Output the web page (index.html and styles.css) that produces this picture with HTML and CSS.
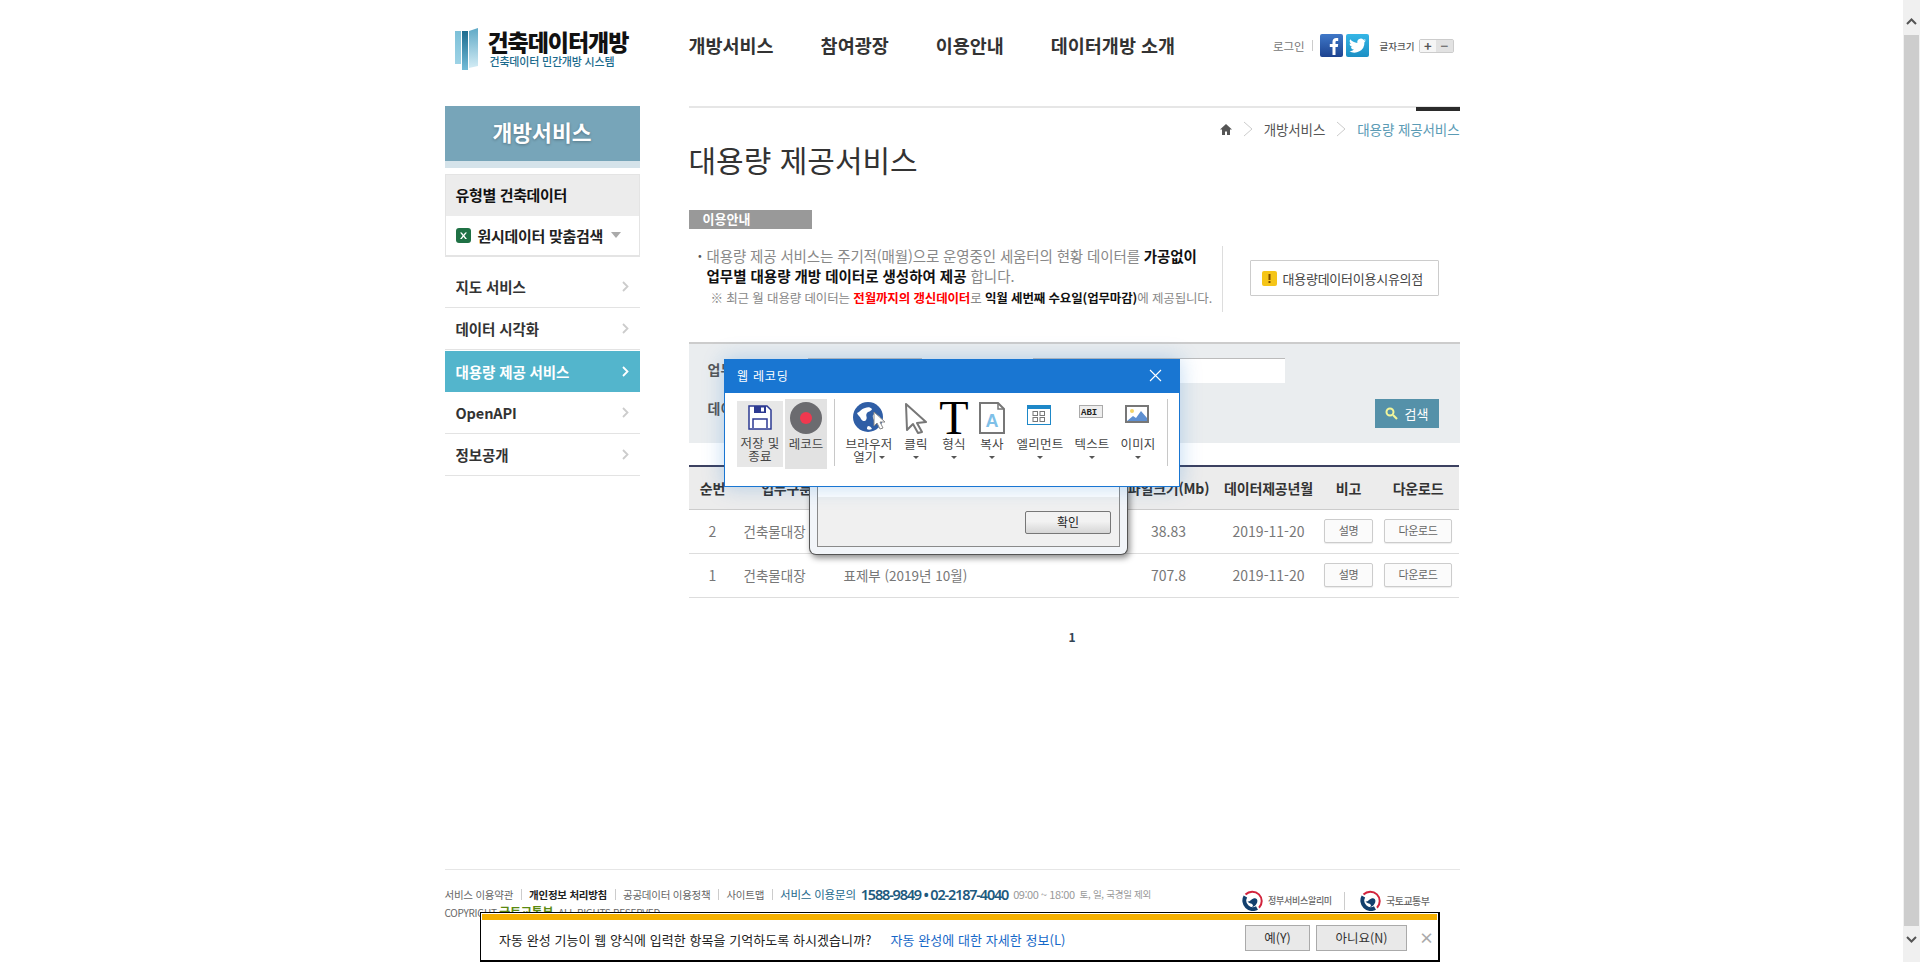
FILE: index.html
```html
<!DOCTYPE html>
<html lang="ko">
<head>
<meta charset="utf-8">
<title>대용량 제공서비스</title>
<link rel="stylesheet" href="styles.css">
</head>
<body>
<div class="wrap">
  <header class="header">
    <a class="logo">
      <svg class="logo-mark" width="24" height="42" viewBox="0 0 24 42">
        <defs>
          <linearGradient id="lg1" x1="0" y1="0" x2="0" y2="1"><stop offset="0" stop-color="#7cc0d8"/><stop offset="1" stop-color="#9ed3e6"/></linearGradient>
          <linearGradient id="lg2" x1="0" y1="0" x2="0" y2="1"><stop offset="0" stop-color="#1c6c8f"/><stop offset="1" stop-color="#73bcd8"/></linearGradient>
          <linearGradient id="lg3" x1="0" y1="0" x2="0" y2="1"><stop offset="0" stop-color="#5fa9c6"/><stop offset="1" stop-color="#d3ecf5"/></linearGradient>
        </defs>
        <path d="M0 3h6v33H0z" fill="url(#lg1)"/>
        <path d="M7 3h6v39H7z" fill="url(#lg2)"/>
        <path d="M14 3l9-3v38l-9 2z" fill="url(#lg3)"/>
      </svg>
      <span class="logo-text">
        <strong class="logo-title">건축데이터개방</strong>
        <span class="logo-sub">건축데이터 민간개방 시스템</span>
      </span>
    </a>
    <nav class="gnb">
      <a>개방서비스</a><a>참여광장</a><a>이용안내</a><a>데이터개방 소개</a>
    </nav>
    <div class="util">
      <a class="login">로그인</a>
      <span class="util-sep"></span>
      <svg class="sns" width="23" height="23" viewBox="0 0 23 23">
        <defs><linearGradient id="fb" x1="0" y1="0" x2="0" y2="1"><stop offset="0" stop-color="#3f78c8"/><stop offset="1" stop-color="#1d4390"/></linearGradient></defs>
        <rect width="23" height="23" rx="2" fill="url(#fb)"/>
        <path d="M12.500 21v-8h-2.700v-3h2.700V7.800c0-2.500 1.500-3.800 3.700-3.800h2v2.900h-1.400c-1 0-1.300.5-1.300 1.300V10h2.700l-.4 3h-2.300v8z" fill="#fff"/>
      </svg>
      <svg class="sns" width="23" height="23" viewBox="0 0 23 23">
        <defs><linearGradient id="tw" x1="0" y1="0" x2="0" y2="1"><stop offset="0" stop-color="#35b6e6"/><stop offset="1" stop-color="#1b8fc4"/></linearGradient></defs>
        <rect width="23" height="23" rx="2" fill="url(#tw)"/>
        <path d="M20 6.200c-.7.3-1.300.5-2 .6.700-.4 1.300-1.100 1.600-1.900-.7.4-1.400.7-2.200.9a3.500 3.500 0 0 0-6 3.200C8.500 8.800 6 7.400 4.200 5.300c-1 1.600-.5 3.700 1 4.700-.6 0-1.100-.2-1.600-.4 0 1.700 1.200 3.100 2.800 3.500-.5.100-1 .2-1.600.1.500 1.400 1.800 2.400 3.300 2.400A7 7 0 0 1 3 17.100 10 10 0 0 0 18.400 8.200c.6-.5 1.200-1.200 1.600-2z" fill="#fff"/>
      </svg>
      <span class="font-label">글자크기</span>
      <span class="font-btns"><b class="font-plus">+</b><b class="font-minus">−</b></span>
    </div>
  </header>

  <div class="content">
    <aside class="side">
      <h2 class="side-title">개방서비스</h2>
      <div class="type-box">
        <div class="type-head">유형별 건축데이터</div>
        <div class="type-row">
          <svg width="15" height="15" viewBox="0 0 15 15"><rect width="15" height="15" rx="3" fill="#1f7145"/><path d="M4 4.500h1.800L7.500 6.700 9.200 4.500H11L8.400 7.700 11 11H9.200L7.500 8.800 5.800 11H4l2.600-3.300z" fill="#fff"/></svg>
          <span>원시데이터 맞춤검색</span>
          <i class="tri"></i>
        </div>
      </div>
      <ul class="menu">
        <li class="menu-item"><span>지도 서비스</span><svg class="chev" width="7" height="11" viewBox="0 0 7 11"><path d="M1 1l4.500 4.500L1 10" fill="none" stroke="currentColor" stroke-width="1.800"/></svg></li>
        <li class="menu-item"><span>데이터 시각화</span><svg class="chev" width="7" height="11" viewBox="0 0 7 11"><path d="M1 1l4.500 4.500L1 10" fill="none" stroke="currentColor" stroke-width="1.800"/></svg></li>
        <li class="menu-item active"><span>대용량 제공 서비스</span><svg class="chev" width="7" height="11" viewBox="0 0 7 11"><path d="M1 1l4.500 4.500L1 10" fill="none" stroke="currentColor" stroke-width="1.800"/></svg></li>
        <li class="menu-item"><span>OpenAPI</span><svg class="chev" width="7" height="11" viewBox="0 0 7 11"><path d="M1 1l4.500 4.500L1 10" fill="none" stroke="currentColor" stroke-width="1.800"/></svg></li>
        <li class="menu-item"><span>정보공개</span><svg class="chev" width="7" height="11" viewBox="0 0 7 11"><path d="M1 1l4.500 4.500L1 10" fill="none" stroke="currentColor" stroke-width="1.800"/></svg></li>
      </ul>
    </aside>

    <main class="main">
      <div class="crumb">
        <svg width="12" height="11" viewBox="0 0 12 11"><path d="M6 0L0 5.500h2V11h3V7.500h2V11h3V5.500h2z" fill="#555"/></svg>
        <svg class="crumb-sep" width="10" height="16" viewBox="0 0 10 16"><path d="M1 1l8 7-8 7" fill="none" stroke="#ccc"/></svg>
        <span>개방서비스</span>
        <svg class="crumb-sep" width="10" height="16" viewBox="0 0 10 16"><path d="M1 1l8 7-8 7" fill="none" stroke="#ccc"/></svg>
        <span class="crumb-now">대용량 제공서비스</span>
      </div>
      <h1 class="page-title">대용량 제공서비스</h1>
      <div class="guide-tag">이용안내</div>
      <div class="guide">
        <div class="guide-text">
          <p class="guide-line guide-line-1"><span class="dot">·</span>대용량 제공 서비스는 주기적(매월)으로 운영중인 세움터의 현황 데이터를 <b>가공없이</b></p>
          <p class="guide-line"><b>업무별 대용량 개방 데이터로 생성하여 제공</b> 합니다.</p>
          <p class="guide-note">※ 최근 월 대용량 데이터는 <b class="red">전월까지의 갱신데이터</b>로 <b>익월 세번째 수요일(업무마감)</b>에 제공됩니다.</p>
        </div>
        <div class="guide-side">
          <a class="notice-btn">
            <svg width="15" height="15" viewBox="0 0 15 15"><rect width="15" height="15" rx="2" fill="#f5c518"/><rect x="6.500" y="3" width="2" height="6" fill="#7a4b00"/><rect x="6.500" y="10" width="2" height="2" fill="#7a4b00"/></svg>
            대용량데이터이용시유의점
          </a>
        </div>
      </div>

      <div class="search">
        <div class="search-row">
          <label class="search-label">업무구분</label>
          <span class="field field-a"></span>
          <label class="search-label search-label-b">파일명</label>
          <span class="field field-b"></span>
        </div>
        <div class="search-row search-row-2">
          <label class="search-label search-label-2">데이터제공년월</label>
          <a class="search-btn">
            <svg width="13" height="13" viewBox="0 0 13 13"><circle cx="5" cy="5" r="3.500" fill="none" stroke="#f2f59a" stroke-width="2"/><path d="M8 8l4 4" stroke="#f2f59a" stroke-width="2.200"/></svg>
            검색
          </a>
        </div>
      </div>

      <table class="list">
        <thead>
          <tr><th class="c1">순번</th><th class="c2">업무구분</th><th class="c3">파일명</th><th class="c4">파일크기(Mb)</th><th class="c5">데이터제공년월</th><th class="c6">비고</th><th class="c7">다운로드</th></tr>
        </thead>
        <tbody>
          <tr><td>2</td><td class="left">건축물대장</td><td class="left">표제부 (2019년 11월)</td><td>38.83</td><td>2019-11-20</td><td><a class="mini">설명</a></td><td><a class="mini">다운로드</a></td></tr>
          <tr><td>1</td><td class="left">건축물대장</td><td class="left">표제부 (2019년 10월)</td><td>707.8</td><td>2019-11-20</td><td><a class="mini">설명</a></td><td><a class="mini">다운로드</a></td></tr>
        </tbody>
      </table>
      <div class="paging">1</div>
    </main>
  </div>

  <footer class="footer">
    <div class="foot-left">
      <div class="foot-links">
        <a>서비스 이용약관</a><i></i><a class="strong">개인정보 처리방침</a><i></i><a>공공데이터 이용정책</a><i></i><a>사이트맵</a><i></i>
        <span class="foot-q">서비스 이용문의</span><b class="foot-tel">1588-9849 • 02-2187-4040</b><span class="foot-hour">09:00 ~ 18:00</span><span class="foot-time">토, 일, 국경일 제외</span>
      </div>
      <div class="copy">COPYRIGHT <b>국토교통부</b>. ALL RIGHTS RESERVED</div>
    </div>
    <div class="foot-right">
      <svg width="21" height="21" viewBox="0 0 21 21"><path d="M3.500 4.500A9.300 9.300 0 0 1 17 17.800" fill="none" stroke="#d2233c" stroke-width="2"/><path d="M3.400 6.500A8.500 8.500 0 0 0 15 18" fill="none" stroke="#123f6d" stroke-width="4"/><path d="M5.500 11.500c2.500.5 3.500-2 6-3 2.500-.8 4.500 1 3.800 3.500-.7 2.500-3 5-5.300 5 2-1.500 .5-3-1-3.500-1.500-.3-2.500-1-3.500-2z" fill="#123f6d"/></svg>
      <span class="foot-org foot-org-a">정부서비스알리미</span>
      <span class="foot-div"></span>
      <svg width="21" height="21" viewBox="0 0 21 21"><path d="M3.500 4.500A9.300 9.300 0 0 1 17 17.800" fill="none" stroke="#d2233c" stroke-width="2"/><path d="M3.400 6.500A8.500 8.500 0 0 0 15 18" fill="none" stroke="#123f6d" stroke-width="4"/><path d="M5.500 11.500c2.500.5 3.500-2 6-3 2.500-.8 4.500 1 3.800 3.500-.7 2.500-3 5-5.300 5 2-1.500 .5-3-1-3.500-1.500-.3-2.500-1-3.500-2z" fill="#123f6d"/></svg>
      <span class="foot-org">국토교통부</span>
    </div>
  </footer>
</div>

<div class="dialog">
  <div class="dialog-inner">
    <div class="dialog-white"></div>
    <div class="dialog-foot"><a class="ok">확인</a></div>
  </div>
</div>

<div class="rec">
  <div class="rec-title"><span>웹 레코딩</span>
    <svg width="13" height="13" viewBox="0 0 13 13"><path d="M1 1l11 11M12 1L1 12" stroke="#fff" stroke-width="1.100"/></svg>
  </div>
  <div class="rec-tools">
    <div class="rec-save">
      <svg width="24" height="25" viewBox="0 0 24 25"><path d="M1 1h18l4 4v19H1z" fill="#fff" stroke="#2d3a92" stroke-width="1.500"/><path d="M6 1h12v7H6z" fill="#2d3a92"/><rect x="13" y="2.500" width="3" height="4" fill="#fff"/><path d="M5 23v-9h14v9" fill="none" stroke="#2d3a92" stroke-width="1.500"/></svg>
      <span>저장 및<br>종료</span>
    </div>
    <div class="rec-record">
      <svg width="32" height="32" viewBox="0 0 32 32"><circle cx="16" cy="16" r="16" fill="#6b6b6f"/><circle cx="16" cy="16" r="6" fill="#f0384f"/></svg>
      <span>레코드</span>
    </div>
    <span class="rec-sep"></span>
    <div class="tool t-browser">
      <svg width="34" height="32" viewBox="0 0 34 32"><circle cx="15" cy="15" r="15" fill="#2f5ea6"/><path d="M4 11c3-1 4-4 8-5 3-1 5-1 7 1-1 3-4 2-5 4-2 3 1 4-1 7-1 2-4 1-5-1-1-3-3-3-4-6zM20 13c2-1 5 0 7 2 0 3-2 6-4 7-1-3-4-6-3-9zM15 24c2 0 3 1 4 3-2 1-4 1-5 0 0-1 0-2 1-3z" fill="#fff"/><path d="M21 10l0 14 3-3 3 6 3-1-3-6h5z" fill="#fff" stroke="#888"/></svg>
      <span class="tool-name">브라우저<br>열기<i class="car inline"></i></span>
    </div>
    <div class="tool t-click">
      <svg width="24" height="32" viewBox="0 0 24 32"><path d="M2 2l20 18-9 1 5 9-4 1-5-9-6 6z" fill="#fff" stroke="#777" stroke-width="2" stroke-linejoin="round"/></svg>
      <span class="tool-name">클릭</span><i class="car"></i>
    </div>
    <div class="tool t-format">
      <span class="big-t">T</span>
      <span class="tool-name">형식</span><i class="car"></i>
    </div>
    <div class="tool t-copy">
      <svg width="26" height="32" viewBox="0 0 26 32"><path d="M1 1h18l6 6v24H1z" fill="#fff" stroke="#777" stroke-width="2"/><path d="M19 1v6h6" fill="none" stroke="#777" stroke-width="1.500"/><text x="13" y="25" text-anchor="middle" class="svg-a">A</text></svg>
      <span class="tool-name">복사</span><i class="car"></i>
    </div>
    <div class="tool t-element">
      <svg class="mt3" width="24" height="20" viewBox="0 0 24 20"><rect x=".5" y=".5" width="23" height="19" fill="#fff" stroke="#1e88c8"/><rect width="24" height="4" fill="#1e88c8"/><g fill="none" stroke="#777"><rect x="6" y="6.500" width="4.500" height="4"/><rect x="13" y="6.500" width="4.500" height="4"/><rect x="6" y="12.500" width="4.500" height="4"/><rect x="13" y="12.500" width="4.500" height="4"/></g></svg>
      <span class="tool-name">엘리먼트</span><i class="car"></i>
    </div>
    <div class="tool t-text">
      <svg class="mt3" width="24" height="14" viewBox="0 0 24 14"><rect x=".5" y=".5" width="23" height="12" fill="#eee" stroke="#aaa"/><text x="2" y="10" class="svg-abi">ABI</text></svg>
      <span class="tool-name">텍스트</span><i class="car"></i>
    </div>
    <div class="tool t-image">
      <svg class="mt3" width="24" height="18" viewBox="0 0 24 18"><rect x="1" y="1" width="22" height="16" fill="#fff" stroke="#777" stroke-width="2"/><circle cx="7" cy="6" r="2" fill="#f3d468"/><path d="M2 16l6-5 3 2 5-7 6 7v3z" fill="#5d8fd1"/></svg>
      <span class="tool-name">이미지</span><i class="car"></i>
    </div>
    <span class="rec-sep rec-sep-2"></span>
  </div>
</div>

<div class="autofill">
  <div class="autofill-bar"></div>
  <div class="autofill-body">
    <span class="af-msg">자동 완성 기능이 웹 양식에 입력한 항목을 기억하도록 하시겠습니까?</span>
    <a class="af-link">자동 완성에 대한 자세한 정보(L)</a>
    <a class="af-btn af-yes">예(Y)</a>
    <a class="af-btn af-no">아니요(N)</a>
    <span class="af-x">×</span>
  </div>
</div>

<div class="scrollbar">
  <svg width="11" height="7" viewBox="0 0 11 7"><path d="M1 6l4.500-4.500L10 6" fill="none" stroke="#555" stroke-width="2"/></svg>
  <div class="thumb"></div>
  <svg width="11" height="7" viewBox="0 0 11 7"><path d="M1 1l4.500 4.500L10 1" fill="none" stroke="#555" stroke-width="2"/></svg>
</div>
</body>
</html>
```

FILE: styles.css
```css
* { box-sizing: border-box; }
html, body { margin: 0; height: 962px; overflow: hidden; }
body {
  padding-right: 16px;
  background: #fff;
  color: #666;
  font-family: "Noto Sans CJK KR", "Noto Sans", sans-serif;
  font-size: 13px;
}
a { color: inherit; text-decoration: none; }
ul { list-style: none; margin: 0; padding: 0; }
p, h1, h2 { margin: 0; }

.wrap { width: 1015px; margin: 0 auto; }

/* header */
.header { display: flex; height: 106px; align-items: flex-start; position: relative; }
.logo { width: 244px; display: flex; padding: 28px 0 0 10px; }
.logo-mark { flex: none; margin-right: 9px; }
.logo-text { display: flex; flex-direction: column; }
.logo-title { font-size: 23px; line-height: 26px; font-weight: 900; color: #111; letter-spacing: -1.05px; white-space: nowrap; }
.logo-sub { font-size: 11px; line-height: 14px; color: #1a6a8d; font-weight: 500; margin-left: 2px; letter-spacing: -.2px; white-space: nowrap; }
.gnb { display: flex; gap: 47px; padding-top: 32px; font-size: 18.500px; line-height: 26px; font-weight: 700; color: #333; white-space: nowrap; }
.util { position: absolute; right: 6px; top: 34px; display: flex; align-items: center; height: 23px; }
.login { font-size: 11.500px; color: #777; letter-spacing: -.1px; }
.util-sep { width: 1px; height: 11px; background: #ccc; margin: 0 7px; }
.sns { margin-right: 3px; }
.font-label { font-size: 9.500px; color: #555; margin: 0 4px 0 8px; font-weight: 500; }
.font-btns { display: flex; width: 35px; height: 14px; border: 1px solid #ccc; border-radius: 2px; font-size: 13px; line-height: 11px; text-align: center; color: #555; }
.font-plus { flex: 1; background: #f5f5f5; }
.font-minus { flex: 1; background: #e2e2e2; color: #777; }

/* layout */
.content { display: flex; gap: 49px; height: 763px; }

/* side */
.side { width: 195px; flex: none; }
.side-title {
  height: 62px; padding-top: 11px;
  background: #77a5b9; border-bottom: 7px solid #d5e3ea;
  color: #fff; font-size: 21.500px; line-height: 30px; font-weight: 700; text-align: center;
  text-shadow: 0 1px 3px rgba(0,0,0,.3);
}
.type-box { margin-top: 6px; height: 83px; border: 1px solid #e4e4e4; border-width: 1px 1px 2px 1px; }
.type-head { height: 41px; padding: 0 10px 2px; background: #ececec; color: #111; font-size: 15px; font-weight: 700; line-height: 39px; letter-spacing: -.35px; }
.type-row { display: flex; align-items: center; height: 38px; padding: 0 10px; color: #222; font-size: 15px; font-weight: 700; letter-spacing: -.3px; }
.type-row span { margin: 0 8px 0 7px; }
.tri { width: 0; height: 0; border: 5px solid transparent; border-top: 6px solid #aaa; border-bottom: 0; }
.menu { padding-top: 9px; }
.menu-item {
  display: flex; justify-content: space-between; align-items: center;
  height: 42px; padding: 0 11px 0 11px;
  border-bottom: 1px solid #e3e3e3;
  color: #333; font-size: 14.500px; font-weight: 700; letter-spacing: -.1px;
}
.menu-item .chev { color: #ccc; }
.menu-item.active { background: #53b5cc; color: #fff; border-bottom-color: #53b5cc; margin-top: 1px; height: 41px; }
.menu-item.active .chev { color: #fff; }

/* main */
.main { width: 771px; flex: none; position: relative; border-top: 2px solid #e6e6e6; }
.main::before { content: ""; position: absolute; right: 0; top: -1px; width: 44px; height: 4px; background: #2b2b2b; }
.crumb { display: flex; justify-content: flex-end; align-items: center; height: 42px; font-size: 13.500px; color: #555; letter-spacing: -.1px; }
.crumb-sep { margin: 0 11px; }
.crumb-now { color: #5b9bb5; }
.page-title { margin-top: -12px; font-size: 30px; line-height: 42px; font-weight: 400; color: #333; letter-spacing: 0; white-space: nowrap; }
.guide-tag { margin-top: 30px; width: 123px; height: 19px; padding-left: 14px; background: #999; color: #fff; font-size: 13px; line-height: 18px; font-weight: 700; }
.guide { display: flex; margin-top: 17px; height: 66px; }
.guide-text { width: 533px; padding-left: 18px; position: relative; }
.guide-line { font-size: 14.500px; line-height: 20px; color: #888; letter-spacing: -.02px; white-space: nowrap; }
.guide-line-1 { letter-spacing: -.13px; }
.guide-line b { color: #111; font-weight: 700; }
.dot { position: absolute; left: 9px; color: #555; font-weight: 700; }
.guide-note { margin-top: 3px; padding-left: 4px; font-size: 12.500px; line-height: 18px; color: #888; letter-spacing: -.14px; white-space: nowrap; }
.guide-note b { color: #111; font-weight: 700; }
.guide-note b.red { color: #f00; }
.guide-side { flex: 1; border-left: 1px solid #ddd; padding: 14px 0 0 27px; }
.notice-btn { display: flex; align-items: center; gap: 6px; width: 189px; height: 36px; padding-left: 11px; border: 1px solid #ccc; color: #444; font-size: 13px; letter-spacing: -.25px; white-space: nowrap; border-radius: 1px; }

.search { margin-top: 30px; height: 101px; padding: 14px 21px 0 19px; background: #eaedef; border-top: 2px solid #ccc; }
.search-row { display: flex; align-items: center; height: 25px; }
.search-row-2 { margin-top: 16px; height: 29px; justify-content: space-between; }
.search-label { width: 100px; padding-bottom: 4px; font-size: 14px; font-weight: 700; color: #555; white-space: nowrap; }
.search-label-2 { padding-bottom: 12px; }
.search-label-b { width: 111px; text-indent: 14px; }
.field { height: 25px; background: #fff; border-top: 1px solid #bbb; }
.field-a { width: 114px; }
.field-b { width: 252px; }
.search-btn { display: flex; align-items: center; justify-content: center; gap: 7px; width: 64px; height: 29px; background: #5591a9; color: #fff; font-size: 13px; }

.list { margin-top: 22px; width: 770px; border-collapse: collapse; table-layout: fixed; border-top: 2px solid #3c4160; }
.list th { height: 43px; background: #ececec; border-bottom: 1px solid #ccc; color: #333; font-size: 14px; font-weight: 700; padding: 0; white-space: nowrap; letter-spacing: -.2px; }
.list td { height: 44px; border-bottom: 1px solid #ddd; text-align: center; color: #777; font-size: 14px; padding: 0; white-space: nowrap; }
.list td.left { text-align: left; padding-left: 7px; font-size: 13.500px; }
.c1 { width: 48px; } .c2 { width: 100px; } .c3 { width: 283px; } .c4 { width: 98px; } .c5 { width: 102px; } .c6 { width: 58px; } .c7 { width: 81px; }
.mini { display: inline-block; height: 24px; padding: 0 13.500px; border: 1px solid #ccc; border-radius: 2px; background: #fbfbfb; box-shadow: 0 1px 1px rgba(0,0,0,.08); color: #666; font-size: 11px; line-height: 20px; letter-spacing: -.4px; vertical-align: middle; }
.paging { margin-top: 30px; text-align: center; font-size: 12px; line-height: 18px; font-weight: 700; color: #345; padding-right: 4px; }

/* footer */
.footer { display: flex; justify-content: space-between; height: 93px; border-top: 1px solid #e6e6e6; }
.foot-left { padding-top: 14px; }
.foot-links { display: flex; align-items: center; height: 20px; font-size: 10.500px; color: #666; white-space: nowrap; letter-spacing: -.25px; }
.foot-links i { width: 1px; height: 11px; background: #ccc; margin: 0 7.500px; }
.foot-links .strong { color: #222; font-weight: 700; }
.foot-q { color: #1e6a8d; font-size: 11.500px; letter-spacing: -.2px; }
.foot-tel { margin: 0 5px 0 5px; color: #1e5a7e; font-family: "Noto Sans", sans-serif; font-size: 14.500px; font-weight: 600; letter-spacing: -1.2px; }
.foot-hour { color: #999; font-size: 11px; margin-right: 5px; letter-spacing: -.45px; }
.foot-time { color: #999; font-size: 9.500px; letter-spacing: -.25px; }
.copy { margin-top: -1px; font-size: 10px; line-height: 18px; color: #666; letter-spacing: -.25px; }
.copy b { color: #5a8a10; font-size: 12px; }
.foot-right { display: flex; align-items: center; height: 21px; margin: 20px 30px 0 0; }
.foot-org { margin-left: 5px; font-size: 10px; font-weight: 500; color: #666; letter-spacing: -.5px; white-space: nowrap; }
.foot-org-a { letter-spacing: -.3px; margin-left: 5px; width: 64px; font-size: 9px; }
.foot-div { width: 1px; height: 18px; background: #ccc; margin: 0 15px 0 12px; }

/* underlying dialog */
.dialog { position: absolute; left: 809px; top: 460px; width: 319px; height: 95px; padding: 0 7px 7px; background: #f2f5f9; border: 1px solid #555; border-top: 0; border-radius: 0 0 7px 7px; box-shadow: 2px 3px 6px rgba(0,0,0,.45); }
.dialog-inner { height: 100%; border: 1px solid #8a8a8a; border-top: 0; background: #f0f0f0; }
.dialog-white { height: 37px; background: #fff; }
.dialog-foot { display: flex; justify-content: flex-end; padding: 14px 8px 0 0; }
.ok { width: 86px; height: 23px; border: 1px solid #777; border-radius: 2px; background: linear-gradient(#f2f2f2 45%, #d6d6d6); color: #222; font-size: 12px; line-height: 20px; text-align: center; }

/* web recording */
.rec { position: absolute; left: 724px; top: 359px; width: 456px; height: 128px; background: #fff; border: 1px solid #1976d2; border-top: 0; box-shadow: 0 0 20px rgba(25,118,210,.28); }
.rec-title { display: flex; justify-content: space-between; align-items: center; height: 34px; margin: 0 -1px; padding: 0 18px 2px 13px; background: #1976d2; color: #fff; font-size: 12px; letter-spacing: .8px; }
.rec-tools { display: flex; align-items: flex-start; height: 94px; padding: 6px 0 0 12px; color: #444; font-size: 12.500px; line-height: 13px; text-align: center; }
.rec-save { width: 46px; height: 66px; margin: 2px 2px 0 0; padding-top: 4px; background: #e7e7e7; letter-spacing: .3px; }
.rec-save svg, .rec-record svg { display: block; margin: 0 auto; }
.rec-save span { display: block; margin-top: 6px; white-space: nowrap; }
.rec-record { width: 42px; height: 70px; padding-top: 3px; background: #e2e2e2; }
.rec-record span { display: block; margin-top: 3px; white-space: nowrap; }
.rec-sep { width: 1px; height: 67px; background: #c8c8c8; margin: 0 10px 0 7px; flex: none; }
.rec-sep-2 { margin: 0 0 0 6px; }
.tool { display: flex; flex-direction: column; align-items: center; height: 66px; padding-top: 3px; position: relative; }
.tool svg, .big-t { height: 32px; flex: none; }
.tool svg.mt3 { height: auto; margin: 3px 0 9px -2px; }
.tool-name { margin-top: 3px; white-space: nowrap; letter-spacing: .2px; }
.t-browser { width: 48px; margin-right: 4px; }
.t-browser svg { margin-left: 2px; }
.t-click, .t-format, .t-copy { width: 38px; }
.t-element { width: 58px; }
.t-text, .t-image { width: 46px; }
.tool.t-text svg.mt3 { margin-bottom: 15px; }
.tool.t-image svg.mt3 { margin-bottom: 11px; }
.big-t { font-family: "Liberation Serif", serif; font-size: 48px; line-height: 32px; color: #000; }
.car { width: 0; height: 0; margin-top: 6px; border: 3px solid transparent; border-top: 3px solid #555; border-bottom: 0; }
.car.inline { display: inline-block; margin: 0 0 2px 2px; vertical-align: middle; }
.svg-a { font-family: "Liberation Sans", sans-serif; font-size: 18px; font-weight: 700; fill: #7fc0e8; }
.svg-abi { font-family: "Liberation Mono", monospace; font-size: 9px; font-weight: 700; fill: #222; }

/* autocomplete bar */
.autofill { position: absolute; left: 480px; top: 912px; width: 960px; height: 50px; background: #fff; border: 1px solid #000; border-width: 1px 2px 2px 1px; padding: 1px 0 0 1px; }
.autofill-bar { height: 6px; margin-right: 1px; background: #f5b000; }
.autofill-body { display: flex; align-items: center; height: 38px; padding: 1px 0 0 17px; position: relative; }
.af-msg { font-size: 13px; color: #222; white-space: nowrap; letter-spacing: .06px; }
.af-link { margin-left: 19px; font-size: 13px; color: #1668c8; white-space: nowrap; letter-spacing: .06px; }
.af-btn { position: absolute; top: 5px; height: 26px; border: 1px solid #aaa; background: #e9e9e9; color: #333; font-size: 12.500px; line-height: 23px; text-align: center; }
.af-yes { left: 763px; width: 65px; }
.af-no { left: 834px; width: 91px; }
.af-x { position: absolute; left: 937px; top: 8px; font-size: 15px; line-height: 20px; font-weight: 700; color: #aaa; }

/* scrollbar */
.scrollbar { position: absolute; right: 0; top: 0; width: 17px; height: 962px; background: #f0f0f0; display: flex; flex-direction: column; align-items: center; padding: 18px 0 0; }
.thumb { width: 15px; height: 891px; margin: 10px 0 10px; background: #cdcdcd; }
```
